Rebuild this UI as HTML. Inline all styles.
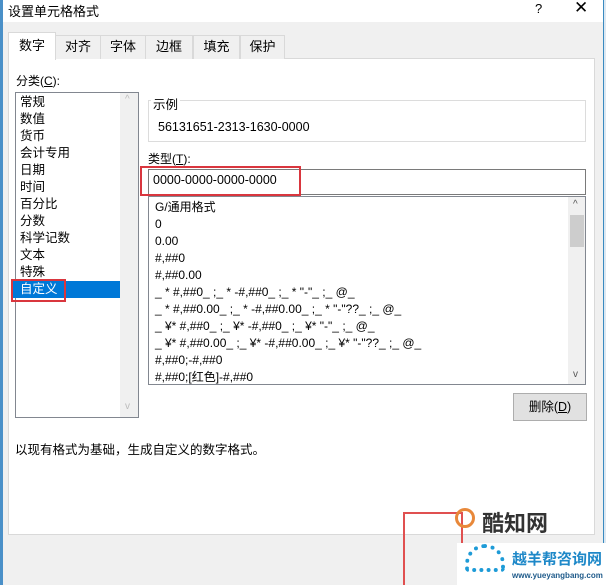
<!DOCTYPE html>
<html><head><meta charset="utf-8"><style>
*{margin:0;padding:0;box-sizing:border-box}
body{width:606px;height:585px;position:relative;overflow:hidden;background:#fff;font-family:"Liberation Sans","Noto Sans CJK SC",sans-serif;font-size:12px;color:#000}
.a{position:absolute}
.tab{position:absolute;top:35px;height:24px;border:1px solid #d9d9d9;border-bottom:none;background:#f0f0f0;text-align:center;line-height:22px;font-size:13px}
.row{position:absolute;left:6px;white-space:nowrap;font-size:12px;line-height:17px}
</style></head><body>
<div class="a" style="left:0;top:0;width:3px;height:585px;background:#4a90c8"></div>
<div class="a" style="left:603px;top:0;width:3px;height:585px;background:#dce8f2;border-left:1px solid #3a8ac0"></div>
<div class="a" style="left:8px;top:1px;font-size:13px">设置单元格格式</div>
<div class="a" style="left:535px;top:1px;font-size:13px">?</div>
<div class="a" style="left:574px;top:-2px;font-size:17px">✕</div>
<div class="a" style="left:3px;top:22px;width:600px;height:563px;background:#f0f0f0"></div>
<div class="a" style="left:8px;top:58px;width:587px;height:477px;background:#fff;border:1px solid #d9d9d9"></div>
<div class="tab" style="left:55px;width:46px">对齐</div>
<div class="tab" style="left:100px;width:46px">字体</div>
<div class="tab" style="left:145px;width:48px">边框</div>
<div class="tab" style="left:193px;width:47px">填充</div>
<div class="tab" style="left:240px;width:45px">保护</div>
<div class="tab" style="left:8px;top:32px;width:48px;height:28px;background:#fff;line-height:26px">数字</div>
<div class="a" style="left:16px;top:72px;font-size:12px">分类(<u>C</u>):</div>
<div class="a" style="left:15px;top:92px;width:124px;height:326px;border:1px solid #828790;background:#fff"></div>
<div class="a" style="left:120px;top:93px;width:18px;height:324px;background:#f0f0f0"></div>
<div class="a" style="left:125px;top:94px;color:#bbb;font-size:10px">^</div>
<div class="a" style="left:125px;top:401px;color:#bbb;font-size:10px">v</div>
<div class="a" style="left:13px;top:281px;width:107px;height:17px;background:#0078d7"></div>
<div class="a" style="left:20px;top:94px;line-height:17px;font-size:12.5px">常规<br>数值<br>货币<br>会计专用<br>日期<br>时间<br>百分比<br>分数<br>科学记数<br>文本<br>特殊<br><span style="color:#fff">自定义</span></div>
<div class="a" style="left:11px;top:279px;width:55px;height:23px;border:2px solid #d9363e"></div>
<div class="a" style="left:148px;top:100px;width:438px;height:42px;border:1px solid #dcdcdc"></div>
<div class="a" style="left:151px;top:94px;background:#fff;padding:0 2px;font-size:12.5px">示例</div>
<div class="a" style="left:158px;top:120px;font-size:12.5px">56131651-2313-1630-0000</div>
<div class="a" style="left:148px;top:150px;font-size:12px">类型(<u>T</u>):</div>
<div class="a" style="left:148px;top:169px;width:438px;height:26px;border:1px solid #7a7a7a"></div>
<div class="a" style="left:153px;top:173px;font-size:12.5px">0000-0000-0000-0000</div>
<div class="a" style="left:140px;top:166px;width:161px;height:30px;border:2px solid #d9363e"></div>
<div class="a" style="left:148px;top:196px;width:438px;height:189px;border:1px solid #828790;overflow:hidden">
<div class="a" style="left:419px;top:0;width:18px;height:189px;background:#f0f0f0"></div>
<div class="a" style="left:421px;top:18px;width:14px;height:32px;background:#cdcdcd"></div>
<div class="a" style="left:424px;top:2px;color:#555;font-size:10px">^</div>
<div class="a" style="left:424px;top:172px;color:#555;font-size:10px">v</div>
<div class="row" style="top:2px">G/通用格式</div>
<div class="row" style="top:19px">0</div>
<div class="row" style="top:36px">0.00</div>
<div class="row" style="top:53px">#,##0</div>
<div class="row" style="top:70px">#,##0.00</div>
<div class="row" style="top:87px">_ * #,##0_ ;_ * -#,##0_ ;_ * "-"_ ;_ @_</div>
<div class="row" style="top:104px">_ * #,##0.00_ ;_ * -#,##0.00_ ;_ * "-"??_ ;_ @_</div>
<div class="row" style="top:121px">_ ¥* #,##0_ ;_ ¥* -#,##0_ ;_ ¥* "-"_ ;_ @_</div>
<div class="row" style="top:138px">_ ¥* #,##0.00_ ;_ ¥* -#,##0.00_ ;_ ¥* "-"??_ ;_ @_</div>
<div class="row" style="top:155px">#,##0;-#,##0</div>
<div class="row" style="top:172px">#,##0;[红色]-#,##0</div>
</div>
<div class="a" style="left:513px;top:393px;width:74px;height:28px;background:#e1e1e1;border:1px solid #adadad;text-align:center;line-height:26px;font-size:12.5px">删除(<u>D</u>)</div>
<div class="a" style="left:15px;top:439px;font-size:12.5px">以现有格式为基础，生成自定义的数字格式。</div>
<div class="a" style="left:403px;top:512px;width:60px;height:73px;border:2px solid #e05050;border-bottom:none"></div>
<div class="a" style="left:455px;top:508px;width:20px;height:20px;border-radius:50%;border:3px solid #e8883a"></div>
<div class="a" style="left:482px;top:506px;font-size:22px;font-weight:bold;color:#333">酷知网</div>
<div class="a" style="left:457px;top:543px;width:149px;height:42px;background:#fff"></div>
<div class="a" style="left:465px;top:544px;width:40px;height:28px;border:4px dotted #1e9bd7;border-radius:20px 20px 4px 4px"></div>
<div class="a" style="left:512px;top:548px;font-size:15px;font-weight:bold;color:#1e88c8;white-space:nowrap">越羊帮咨询网</div>
<div class="a" style="left:512px;top:571px;font-size:8px;font-weight:bold;color:#1e5a8a;white-space:nowrap">www.yueyangbang.com</div>
</body></html>
